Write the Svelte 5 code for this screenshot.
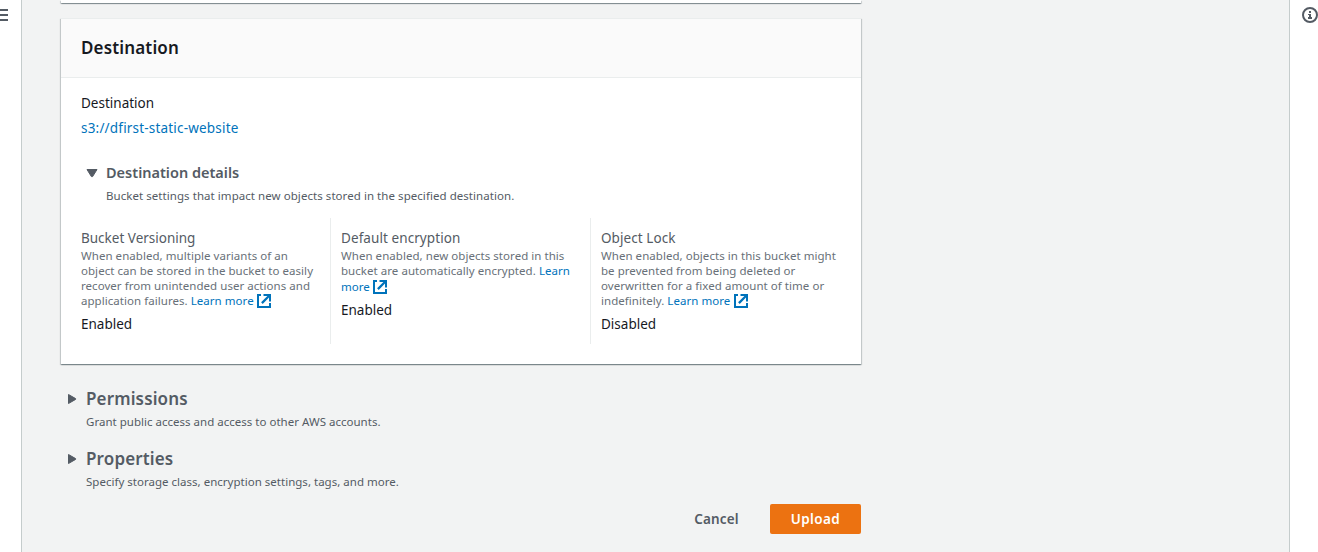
<script>
  const settings = [
    {
      label: 'Bucket Versioning',
      lines: ['When enabled, multiple variants of an', 'object can be stored in the bucket to easily', 'recover from unintended user actions and'],
      tail: 'application failures. ',
      link: 'Learn more',
      value: 'Enabled'
    },
    {
      label: 'Default encryption',
      lines: ['When enabled, new objects stored in this'],
      split: ['bucket are automatically encrypted. ', 'Learn'],
      tail: '',
      link: 'more',
      value: 'Enabled'
    },
    {
      label: 'Object Lock',
      lines: ['When enabled, objects in this bucket might', 'be prevented from being deleted or', 'overwritten for a fixed amount of time or'],
      tail: 'indefinitely. ',
      link: 'Learn more',
      value: 'Disabled'
    }
  ];
  const sections = [
    { title: 'Permissions', text: 'Grant public access and access to other AWS accounts.' },
    { title: 'Properties', text: 'Specify storage class, encryption settings, tags, and more.' }
  ];
</script>

<div class="shell">
  <aside class="nav">
    <svg width="8" height="22" viewBox="0 0 8 22" shape-rendering="crispEdges"><path d="M0 9h8v2H0zM0 14h8v2H0zM0 19h8v2H0z" fill="#545b64" /></svg>
  </aside>
  <main>
    <div class="card previous"></div>
    <section class="card">
      <header><h2>Destination</h2></header>
      <div class="body">
        <div class="label dark">Destination</div>
        <div class="bucket"><span class="link">s3://dfirst-static-website</span></div>
        <div class="details">
          <svg width="12" height="10" viewBox="0 0 12 10"><path d="M1 1.5h10L6.6 8.6H5.4z" fill="#545b64" stroke="#545b64" stroke-linejoin="round" /></svg>
          <h3>Destination details</h3>
        </div>
        <p class="note">Bucket settings that impact new objects stored in the specified destination.</p>
        <div class="columns">
          {#each settings as s}
            <div class="column">
              <div class="label">{s.label}</div>
              <div class="desc">
                {#each s.lines as line}<div>{line}</div>{/each}
                {#if s.split}<div>{s.split[0]}<span class="link">{s.split[1]}</span></div>{/if}
                <div class="last" class:wrapped={s.split}>
                  <span class="tail">{s.tail}<span class="link">{s.link}</span></span>
                  <svg width="14" height="14" viewBox="0 0 14 14" fill="#0073bb"><path d="M0 0h4v2H2v10h10V9h2v5H0z" /><path d="M6.5 0H14v7.5h-2V3.6L5.7 9.9 4.1 8.3 10.4 2H6.5z" /></svg>
                </div>
              </div>
              <div class="value">{s.value}</div>
            </div>
          {/each}
        </div>
      </div>
    </section>
    {#each sections as s}
      <section class="expand">
        <div class="row">
          <svg width="10" height="12" viewBox="0 0 10 12"><path d="M1.5 1.5v9L8.6 6.4v-.8z" fill="#545b64" stroke="#545b64" stroke-linejoin="round" /></svg>
          <h2>{s.title}</h2>
        </div>
        <p class="note">{s.text}</p>
      </section>
    {/each}
    <div class="actions">
      <button class="cancel">Cancel</button>
      <button class="upload">Upload</button>
    </div>
  </main>
  <aside class="info">
    <svg width="16" height="16" viewBox="0 0 16 16"><circle cx="8" cy="8" r="7" fill="none" stroke="#545b64" stroke-width="2" /><path d="M7 4h2v2H7zM6 7h3v3h1v2H6v-2h1V8H6z" fill="#545b64" /></svg>
  </aside>
</div>

<style>
  :global(body) { margin: 0; overflow: hidden; }
  .shell { display: flex; height: 552px; box-sizing: border-box; overflow: hidden; background: #f2f3f3; font-family: 'Noto Sans', sans-serif; font-size: 13.5px; line-height: 20px; color: #16191f; }
  .nav { width: 21px; flex: none; background: #fff; border-right: 1px solid #c5cccc; }
  .info { width: 28px; flex: none; background: #fff; border-left: 1px solid #c5cccc; }
  .info svg { display: block; margin: 7px 0 0 12px; }
  .nav svg { display: block; }
  main { flex: 1; padding-left: 39px; }
  h2, h3, p { margin: 0; }
  svg { flex: none; }
  .card { width: 800px; background: #fff; box-shadow: 0 1px 1px 0 rgba(0, 28, 36, .3), 1px 1px 1px 0 rgba(0, 28, 36, .15), -1px 1px 1px 0 rgba(0, 28, 36, .15); border-top: 1px solid #eaeded; box-sizing: border-box; }
  .previous { height: 3px; margin-bottom: 15px; border-top: 0; }
  header { height: 58px; background: #fafafa; border-bottom: 1px solid #eaeded; padding-left: 20px; }
  header h2 { font-size: 17px; line-height: 58px; font-weight: 600; letter-spacing: .15px; }
  .body { padding: 15px 0 20px; }
  .label { color: #545b64; }
  .dark { padding-left: 20px; color: #16191f; }
  .bucket { padding: 5px 0 24px 20px; letter-spacing: .19px; }
  .link { color: #0073bb; }
  .details { display: flex; align-items: center; gap: 8px; height: 22px; padding-left: 25px; }
  h3 { position: relative; top: -1px; color: #545b64; font-size: 14.5px; font-weight: 600; }
  .note { font-size: 11.5px; color: #545b64; line-height: 20px; white-space: nowrap; letter-spacing: .015px; }
  .body .note { padding: 2px 0 12px 45px; letter-spacing: .055px; }
  .columns { display: grid; grid-template-columns: 270px 260px 270px; height: 126px; }
  .column { box-sizing: border-box; padding: 10px 0 0 20px; border-right: 1px solid #eaeded; }
  .column + .column { padding-left: 10px; }
  .column:last-child { border: 0; }
  .column + .column .label { letter-spacing: .08px; }
  .desc { font-size: 11.5px; line-height: 15px; color: #687078; white-space: nowrap; letter-spacing: .045px; }
  .last { display: flex; align-items: center; gap: 3.5px; height: 15px; }
  .tail { white-space: pre; }
  .wrapped { padding-top: 1px; }
  .value { margin-top: 6px; }
  .expand { height: 60px; color: #545b64; }
  .card + .expand { margin-top: 23px; }
  .row { display: flex; align-items: center; gap: 9px; height: 24px; padding-left: 6px; }
  .row h2 { font-size: 17px; font-weight: 600; letter-spacing: .14px; }
  .expand .note { padding: 1px 0 0 25px; }
  .actions { display: flex; justify-content: flex-end; width: 800px; margin-top: -3px; }
  button { border: 0; height: 30px; padding: 0; font: 600 13.5px 'Noto Sans', sans-serif; letter-spacing: .15px; }
  .cancel { width: 107px; background: transparent; color: #545b64; }
  .upload { width: 91px; border-radius: 2px; background: #ec7211; color: #fff; letter-spacing: .4px; }
</style>
